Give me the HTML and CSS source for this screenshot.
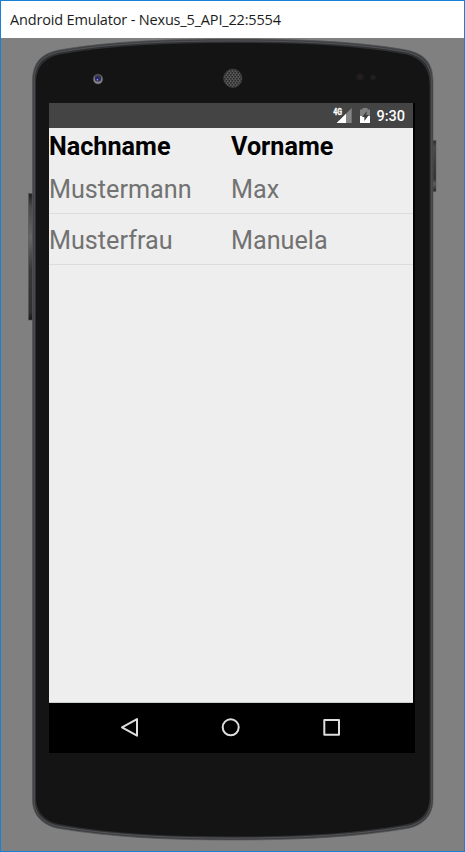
FILE: index.html
```html
<!DOCTYPE html>
<html lang="de">
<head>
<meta charset="utf-8">
<title>Android Emulator - Nexus_5_API_22:5554</title>
<link rel="stylesheet" href="styles.css">
</head>
<body>
<div class="window">
  <header class="titlebar"><span>Android Emulator - Nexus_5_API_22:5554</span></header>
  <main class="stage">
    <svg class="shell" width="463" height="813" viewBox="1 38 463 813" aria-hidden="true">
      <defs>
        <linearGradient id="key" x1="0" y1="0" x2="0" y2="1">
          <stop offset="0" stop-color="#202020"/><stop offset=".1" stop-color="#494949"/>
          <stop offset=".35" stop-color="#666"/><stop offset=".6" stop-color="#383838"/>
          <stop offset=".94" stop-color="#303030"/><stop offset="1" stop-color="#151515"/>
        </linearGradient>
        <linearGradient id="key-right" x1="0" y1="0" x2="0" y2="1">
          <stop offset="0" stop-color="#252525"/><stop offset=".12" stop-color="#484848"/>
          <stop offset=".75" stop-color="#303030"/><stop offset=".85" stop-color="#606060"/><stop offset="1" stop-color="#222"/>
        </linearGradient>
        <pattern id="mesh" width="3" height="4" patternUnits="userSpaceOnUse">
          <rect width="3" height="4" fill="#626262"/>
          <rect x=".3" y=".2" width="1.9" height="1.3" fill="#181818"/>
          <path d="M0 2.2H.8V3.5H0zM1.8 2.2H3V3.5H1.8z" fill="#181818"/>
        </pattern>
      </defs>
      <rect x="28.5" y="193.500" width="5" height="126.500" fill="url(#key)" stroke="#555" stroke-width=".6"/>
      <rect x="432" y="140.500" width="4" height="51" fill="url(#key-right)" stroke="#555" stroke-width=".6"/>
      <path class="rim" d="M32.500 82C32.500 61 42 53 62 49.500C112 41 170 39 233 39S354 41 404 49.500C423 53 433 61 433 82V800C433 816 422 826 407 828.500C354 837.500 296 840 233 840S112 837.500 59 828.500C44 826 32.500 816 32.500 800Z"/>
      <path class="edge" d="M34.300 82C34.300 63 43 55 63 51.500C113 43 170 41 233 41S353 43 403 51.500C421 55 431.300 63 431.300 82V800C431.300 815 421 824 406 826.500C353 835.500 296 838 233 838S113 835.500 60 826.500C45 824 34.300 815 34.300 800Z"/>
      <path class="face" d="M36 84C36 67 44 58 60 54.500C112 45 170 43 233 43S354 45 406 54.500C420 58 429.500 67 429.500 84V798C429.500 813 420 822 405 824.500C352 834 296 836.500 233 836.500S114 834 61 824.500C46 822 36 813 36 798Z"/>
      <circle cx="98" cy="79" r="5.200" fill="#4b4b50"/>
      <circle cx="98" cy="79.500" r="4.300" fill="#85828c"/>
      <circle cx="98" cy="78.400" r="3.200" fill="#33324a"/>
      <circle cx="97.600" cy="79" r="1.600" fill="#25209a"/>
      <circle cx="97.400" cy="79.800" r=".7" fill="#bbb8e6"/>
      <circle cx="232.800" cy="78.300" r="9.200" fill="url(#mesh)" stroke="#3b3b3b" stroke-width=".8"/>
      <circle cx="360" cy="77" r="4" fill="#1c1a1a"/><circle cx="360" cy="77" r="2.300" fill="#251f1f"/>
      <circle cx="373" cy="77.500" r="3" fill="#1e1c1c"/><circle cx="373" cy="77.500" r="1.500" fill="#262121"/>
    </svg>
    <section class="screen">
      <div class="statusbar">
        <svg width="42" height="25" viewBox="332 103 42 25" aria-label="4G, Akku lädt">
          <path d="M351.700 108V123H336.700Z" fill="#848484"/>
          <path d="M346 113.700V123H336.700Z" fill="#fff"/>
          <text class="network" x="333.300" y="115" textLength="8.800" lengthAdjust="spacingAndGlyphs">4G</text>
          <path d="M360 109.500H362.500V108H367.500V109.500H370V117H360Z" fill="#808080"/>
          <path d="M360 116H370V123H360Z" fill="#fff"/>
          <path d="M367 111L362 117H364.400V121L368.800 115H366.300Z" fill="#3d3d3d"/>
        </svg>
        <span class="clock">9:30</span>
      </div>
      <div class="content">
        <div class="row head"><span>Nachname</span><span>Vorname</span></div>
        <div class="row first"><span>Mustermann</span><span>Max</span></div>
        <div class="row last"><span>Musterfrau</span><span>Manuela</span></div>
      </div>
      <nav class="navbar">
        <svg width="366" height="50" viewBox="49 703 366 50" aria-hidden="true">
          <g fill="none" stroke="#dedede" stroke-width="2" stroke-linejoin="round">
            <path d="M137 719V735.700L122 727.300Z"/>
            <circle cx="230.700" cy="727.300" r="8"/>
            <rect x="324.300" y="720" width="14.700" height="14.700"/>
          </g>
        </svg>
      </nav>
    </section>
  </main>
</div>
</body>
</html>
```
FILE: styles.css
```css
* { box-sizing: border-box; }
body { margin: 0; }
.window {
  width: 465px;
  height: 852px;
  display: flex;
  flex-direction: column;
  border: 1px solid #1a80d6;
  overflow: hidden;
}
.titlebar {
  height: 37px;
  display: flex;
  align-items: center;
  padding: 0 0 1px 9px;
  background: #fff;
  color: #1c1c1c;
  font: 14.5px "Open Sans", sans-serif;
  letter-spacing: -0.17px;
  white-space: nowrap;
}
.stage {
  position: relative;
  flex: 1;
  padding: 65px 0 0 48px;
  background: #808080;
}
.shell { position: absolute; left: 0; top: 0; }
.rim { fill: #3e3f40; stroke: #555657; stroke-width: .7; }
.edge { fill: #2e2f31; stroke: #5a5b5e; stroke-width: .8; }
.face { fill: #141414; }
.screen {
  position: relative;
  width: 366px;
  height: 650px;
  display: flex;
  flex-direction: column;
  background: #000;
  font-family: Roboto, sans-serif;
}
.statusbar {
  width: 364px;
  height: 25px;
  display: flex;
  align-items: center;
  justify-content: flex-end;
  gap: 2px;
  padding-right: 8px;
  background: #444;
  color: #fff;
}
.network { font: 700 9px Roboto, sans-serif; fill: #fff; stroke: #fff; stroke-width: .3; }
.clock { padding-top: 1px; font-size: 14.5px; font-weight: 500; line-height: 25px; }
.content {
  width: 364px;
  height: 575px;
  background: #eee;
  border-bottom: 1px solid #c9d0cc;
}
.row {
  height: 51px;
  display: grid;
  grid-template-columns: 182px 182px;
  align-items: center;
  border-bottom: 1px solid #dcdcdc;
  color: #727272;
  font-size: 25.2px;
  line-height: 30px;
}
.head {
  height: 36px;
  padding-top: 1px;
  border: 0;
  color: #000;
  font-weight: 700;
}
.first { height: 50px; padding-top: 2px; }
.last { padding-top: 4px; }
.navbar { height: 50px; }
.navbar svg, .statusbar svg { display: block; }
```
